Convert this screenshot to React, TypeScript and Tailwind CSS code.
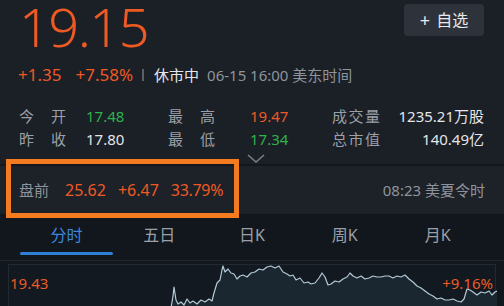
import React from 'react';

const FONT = { fontFamily: '"Noto Sans", "Noto Sans CJK SC", sans-serif' };

const RED = 'text-[#ee5a24]';
const GREEN = 'text-[#2eb24c]';

function Label({ text, width = 'w-[47px]' }: { text: string; width?: string }) {
  return (
    <div className={`flex justify-between text-[#9aa0a8] ${width}`}>
      {text.split('').map((c, i) => (
        <span key={i}>{c}</span>
      ))}
    </div>
  );
}

// rough intraday path, absolute x (0..488), y (0..42)
const pts: [number, number][] = [
  [162, 42], [164, 30], [165, 21], [167, 34], [169, 38], [172, 36], [175, 39], [178, 33],
  [181, 37], [184, 35], [188, 38], [192, 34], [196, 36], [200, 33], [203, 35], [205, 27],
  [208, 17], [211, 14], [213, 4], [214, 0], [216, 6], [219, 3], [222, 7], [225, 8],
  [228, 13], [231, 10], [234, 9], [238, 11], [242, 7], [246, 6], [250, 3], [254, 4],
  [258, 1], [262, 0], [266, 2], [270, 0], [274, 6], [278, 8], [281, 10], [284, 9],
  [287, 14], [291, 12], [295, 17], [299, 16], [302, 18], [306, 17], [310, 12], [313, 7],
  [316, 11], [319, 19], [322, 18], [326, 15], [330, 16], [334, 13], [338, 11], [341, 7],
  [344, 10], [348, 12], [352, 10], [356, 13], [360, 12], [364, 10], [368, 11], [372, 11],
  [376, 10], [380, 10], [384, 12], [388, 10], [392, 11], [396, 9], [400, 13], [404, 16],
  [408, 20], [412, 22], [416, 25], [420, 28], [424, 30], [428, 33], [432, 32], [436, 34],
  [440, 34], [444, 33], [448, 35], [452, 36], [455, 33], [458, 23], [461, 24], [464, 26],
  [468, 29], [472, 26], [476, 27], [480, 25], [483, 29], [486, 26], [488, 25],
];

function Chart() {
  const line = pts.map(([x, y]) => `${x},${y + 1}`).join(' ');
  const area = `${pts[0][0]},44 ${line} 488,44`;
  return (
    <svg width="488" height="44" viewBox="0 0 488 44" className="block">
      <polygon points={area} fill="#1a2630" />
      <polyline points={line} fill="none" stroke="#b4cad6" strokeWidth="1.2" strokeLinejoin="round" />
    </svg>
  );
}

export default function App() {
  return (
    <div className="relative h-[306px] w-[504px] overflow-hidden bg-[#1b1f26] flex flex-col" style={FONT}>
      {/* price */}
      <div className="h-[60px] flex items-start justify-between pl-[19px] pr-[20px]">
        <div className={`text-[54px] leading-[52px] font-light tracking-[-1.5px] ${RED}`}>19.15</div>
        <button className="mt-[4px] h-[32px] w-[80px] rounded-[4px] bg-[#2e333b] text-[16px] text-[#e8eaed] flex items-center justify-center gap-[6px]">
          <span className="text-[18px] leading-none">+</span>
          <span>自选</span>
        </button>
      </div>

      {/* change row */}
      <div className="h-[30px] flex items-center pl-[18px] text-[15px]">
        <span className={`text-[17px] ${RED}`}>+1.35</span>
        <span className={`ml-[14px] text-[17px] ${RED}`}>+7.58%</span>
        <span className="ml-[9px] h-[12px] w-[2px] bg-[#5a6068]" />
        <span className="ml-[10px] text-[#e4e6e9]">休市中</span>
        <span className="ml-[8px] text-[#8e949c]">06-15 16:00 美东时间</span>
      </div>

      {/* stats */}
      <div className="h-[74px] pt-[15px] text-[15px] relative">
        <div className="grid grid-cols-[149px_164px_1fr] pl-[19px] pr-[20px]">
          <div className="flex flex-col">
            <div className="h-[23px] flex items-center gap-[20px]">
              <Label text="今开" />
              <span className={GREEN}>17.48</span>
            </div>
            <div className="h-[23px] flex items-center gap-[20px]">
              <Label text="昨收" />
              <span className="text-[#e4e6e9]">17.80</span>
            </div>
          </div>
          <div className="flex flex-col">
            <div className="h-[23px] flex items-center gap-[35px]">
              <Label text="最高" />
              <span className={RED}>19.47</span>
            </div>
            <div className="h-[23px] flex items-center gap-[35px]">
              <Label text="最低" />
              <span className={GREEN}>17.34</span>
            </div>
          </div>
          <div className="flex flex-col">
            <div className="h-[23px] flex items-center justify-between">
              <Label text="成交量" width="w-[48px]" />
              <span className="text-[#e4e6e9]">1235.21万股</span>
            </div>
            <div className="h-[23px] flex items-center justify-between">
              <Label text="总市值" width="w-[48px]" />
              <span className="text-[#e4e6e9]">140.49亿</span>
            </div>
          </div>
        </div>
        <div className="flex justify-center pl-[8px] mt-[3px]">
          <svg width="18" height="10" viewBox="0 0 18 10">
            <path d="M1 1 L9 8 L17 1" fill="none" stroke="#7d838b" strokeWidth="1.4" />
          </svg>
        </div>
      </div>

      {/* pre-market */}
      <div className="h-[50px] border-t-2 border-[#14171c] bg-[#1d2128] flex items-center justify-between pl-[19px] pr-[19px] text-[15px]">
        <div className="flex items-center">
          <span className="text-[#8e949c]">盘前</span>
          <span className={`ml-[16px] text-[16px] ${RED}`}>25.62</span>
          <span className={`ml-[12px] text-[16px] ${RED}`}>+6.47</span>
          <span className={`ml-[12px] text-[16px] tracking-[-0.3px] ${RED}`}>33.79%</span>
        </div>
        <span className="text-[#8e949c]">08:23 美夏令时</span>
      </div>

      {/* tabs */}
      <div className="h-[47px] bg-[#12161d] border-b border-[#20252c] grid grid-cols-5 px-[20px] text-[16px]">
        {['分时', '五日', '日K', '周K', '月K'].map((t, i) => (
          <div key={t} className="relative flex items-center justify-center pb-[4px]">
            <span className={i === 0 ? 'text-[#3d86d8]' : 'text-[#9aa0a8]'}>{t}</span>
            {i === 0 && <span className="absolute bottom-[5px] left-0 right-0 h-[3px] rounded-full bg-[#2f7fd6]" />}
          </div>
        ))}
      </div>

      {/* chart */}
      <div className="flex-1 bg-[#12161d] pt-[3px] px-[8px]">
        <div className="relative h-full border-t border-l border-r border-[#232930] bg-[#131920]">
          <div className="absolute left-0 top-0">
            <Chart />
          </div>
          <span className={`absolute left-[1px] top-[7px] text-[15px] ${RED}`}>19.43</span>
          <span className={`absolute right-[2px] top-[7px] text-[15px] ${RED}`}>+9.16%</span>
        </div>
      </div>

      {/* highlight annotation */}
      <div className="absolute left-[6px] top-[159px] h-[59px] w-[233px] border-[5px] border-[#f47b20]" />
    </div>
  );
}
